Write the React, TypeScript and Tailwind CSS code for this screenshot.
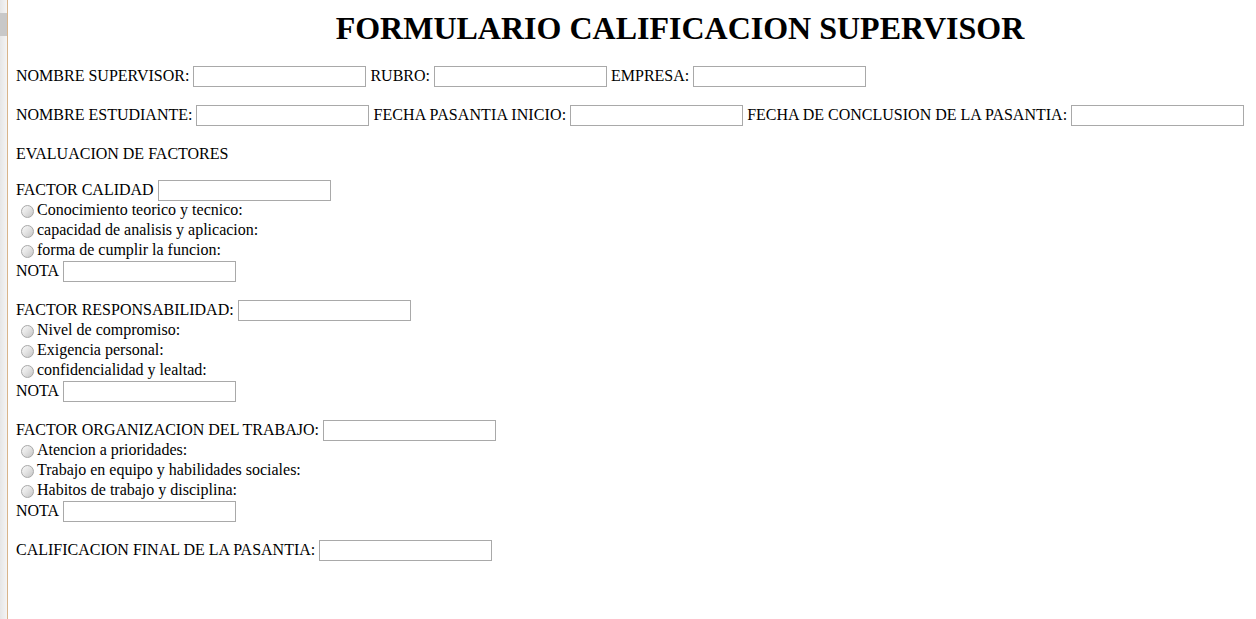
import React from "react";

const Input = ({ w = "w-[173px]" }: { w?: string }) => (
  <span className={`inline-block ${w} h-[21px] border border-[#a9a9a9] bg-white shrink-0`} />
);

const Radio = () => (
  <span className="inline-block ml-[5px] mr-[3px] w-[13px] h-[13px] rounded-full border border-[#a8a8a8] bg-linear-to-br from-[#fafafa] via-[#e2e2e2] to-[#c4c4c4] shrink-0" />
);

const Row = ({ children, className = "" }: { children: React.ReactNode; className?: string }) => (
  <div className={`flex items-center gap-[4px] h-[21px] whitespace-nowrap ${className}`}>{children}</div>
);

const T = ({ children, className = "" }: { children: React.ReactNode; className?: string }) => (
  <span className={`leading-[18px] pb-[2px] ${className}`}>{children}</span>
);

const Factor = ({ title, items, mt }: { title: string; items: string[]; mt: string }) => (
  <div className={mt}>
    <Row>
      <T>{title}</T>
      <Input />
    </Row>
    {items.map((it) => (
      <div key={it} className="flex items-center h-[20px] whitespace-nowrap">
        <Radio />
        <T>{it}</T>
      </div>
    ))}
    <Row>
      <T>NOTA</T>
      <Input />
    </Row>
  </div>
);

export default function App() {
  return (
    <div
      className="flex h-[619px] w-[1256px] overflow-hidden bg-white text-black text-[16px]"
      style={{ fontFamily: '"Liberation Serif", "Times New Roman", serif' }}
    >
      <div className="flex shrink-0">
        <div className="w-[7px] h-full bg-linear-to-r from-[#e6e6e6] to-[#f4f4f4] pt-[13px]">
          <div className="h-[23px] bg-[#c8c8c8]" />
        </div>
        <div className="w-[1px] h-full bg-[#d8b48a]" />
      </div>
      <div className="flex-1 px-[8px]">
        <h1 className="mt-[10px] pl-[96px] text-center text-[32px] font-bold leading-[36px] whitespace-nowrap">
          FORMULARIO CALIFICACION SUPERVISOR
        </h1>
        <Row className="mt-[20px]">
          <T>NOMBRE SUPERVISOR:</T>
          <Input />
          <T>RUBRO:</T>
          <Input />
          <T>EMPRESA:</T>
          <Input />
        </Row>
        <Row className="mt-[18px]">
          <T>NOMBRE ESTUDIANTE:</T>
          <Input />
          <T className="tracking-[0.1px]">FECHA PASANTIA INICIO:</T>
          <Input />
          <T>FECHA DE CONCLUSION DE LA PASANTIA:</T>
          <Input />
        </Row>
        <div className="mt-[19px] leading-[18px]">EVALUACION DE FACTORES</div>
        <Factor
          mt="mt-[17px]"
          title="FACTOR CALIDAD"
          items={["Conocimiento teorico y tecnico:", "capacidad de analisis y aplicacion:", "forma de cumplir la funcion:"]}
        />
        <Factor
          mt="mt-[18px]"
          title="FACTOR RESPONSABILIDAD:"
          items={["Nivel de compromiso:", "Exigencia personal:", "confidencialidad y lealtad:"]}
        />
        <Factor
          mt="mt-[18px]"
          title="FACTOR ORGANIZACION DEL TRABAJO:"
          items={["Atencion a prioridades:", "Trabajo en equipo y habilidades sociales:", "Habitos de trabajo y disciplina:"]}
        />
        <Row className="mt-[18px]">
          <T>CALIFICACION FINAL DE LA PASANTIA:</T>
          <Input />
        </Row>
      </div>
    </div>
  );
}
